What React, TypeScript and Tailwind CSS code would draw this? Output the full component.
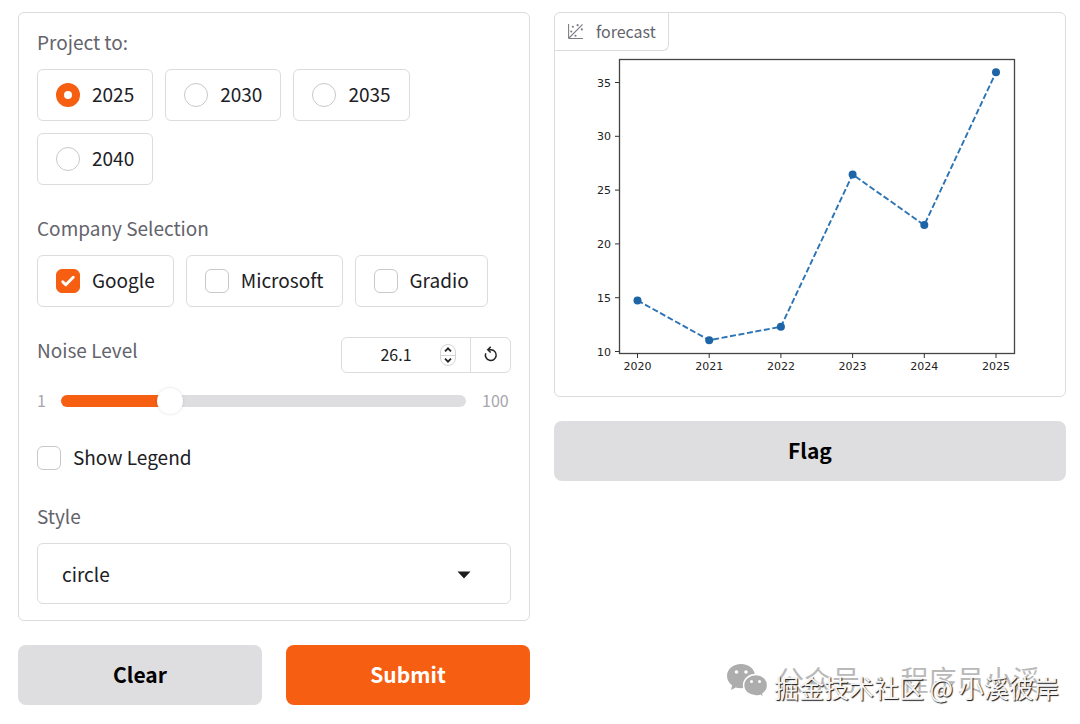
import { useState } from 'react';
import type { ReactNode } from 'react';

const YEARS = ['2025', '2030', '2035', '2040'];
const COMPANIES = ['Google', 'Microsoft', 'Gradio'];
const STYLES = ['circle', 'square', 'triangle'];

const MIN_NOISE = 1;
const MAX_NOISE = 100;
const DEFAULT_NOISE = 26.1;

const FORECAST = [
  { year: 2020, value: 14.75 },
  { year: 2021, value: 11.05 },
  { year: 2022, value: 12.3 },
  { year: 2023, value: 26.45 },
  { year: 2024, value: 21.75 },
  { year: 2025, value: 35.95 }
];

const Y_TICKS = [10, 15, 20, 25, 30, 35];

// Chart scales, in viewBox units
const chartX = (year: number) => 82.5 + (year - 2020) * 71.7;
const chartY = (value: number) => 338.5 - (value - 10) * 10.76;

function Caption({ children }: { children: ReactNode }) {
  return <span className="block text-[19px] leading-[26px] text-[#64646c]">{children}</span>;
}

interface TickBoxProps {
  checked: boolean;
  onChange: () => void;
}

function TickBox({ checked, onChange }: TickBoxProps) {
  return (
    <span className="grid size-6 shrink-0 place-items-center">
      <input
        type="checkbox"
        checked={checked}
        onChange={onChange}
        className="col-start-1 row-start-1 size-6 appearance-none rounded-md border border-[#c8c8cc] bg-white checked:border-[#f65e12] checked:bg-[#f65e12]"
      />
      {checked && (
        <svg viewBox="0 0 16 16" className="pointer-events-none col-start-1 row-start-1 size-6" fill="white">
          <path d="M12.207 4.793a1 1 0 010 1.414l-5 5a1 1 0 01-1.414 0l-2-2a1 1 0 011.414-1.414L6.5 9.086l4.293-4.293a1 1 0 011.414 0z" />
        </svg>
      )}
    </span>
  );
}

const optionClass =
  'flex h-[52px] items-center gap-3 rounded-md border border-[#dcdcdf] bg-white px-[18px] text-[19px] leading-7';

function ForecastChart() {
  const line = FORECAST.map((p) => `${chartX(p.year)},${chartY(p.value)}`).join(' ');

  return (
    <svg
      viewBox="0 0 510 383"
      className="block w-full"
      role="img"
      aria-label="forecast"
      fontFamily='"DejaVu Sans", sans-serif'
      fontSize="11"
      fill="#222"
    >
      <rect x="64.5" y="46.5" width="395" height="294" fill="none" stroke="#444" strokeWidth="1.3" />
      {Y_TICKS.map((tick) => (
        <g key={tick}>
          <line x1="60" x2="64.5" y1={chartY(tick)} y2={chartY(tick)} stroke="#333" />
          <text x="56" y={chartY(tick) + 4} textAnchor="end">{tick}</text>
        </g>
      ))}
      {FORECAST.map(({ year }) => (
        <g key={year}>
          <line x1={chartX(year)} x2={chartX(year)} y1="340.5" y2="345" stroke="#333" />
          <text x={chartX(year)} y="357" textAnchor="middle">{year}</text>
        </g>
      ))}
      <polyline points={line} fill="none" stroke="#2c73b4" strokeWidth="1.9" strokeDasharray="6 2.6" />
      {FORECAST.map((p) => (
        <circle key={p.year} cx={chartX(p.year)} cy={chartY(p.value)} r="4" fill="#1d65a6" />
      ))}
    </svg>
  );
}

function PlotIcon() {
  return (
    <svg viewBox="0 0 32 32" className="size-[17px]" fill="#7b7b82">
      <circle cx="20" cy="4" r="2" />
      <circle cx="8" cy="16" r="2" />
      <circle cx="28" cy="12" r="2" />
      <circle cx="11" cy="7" r="2" />
      <circle cx="16" cy="24" r="2" />
      <path d="M30 3.413L28.586 2L4 26.585V2H2v26a2 2 0 0 0 2 2h26v-2H5.413z" />
    </svg>
  );
}

function Watermark() {
  return (
    <div className="pointer-events-none absolute right-5 bottom-4 h-12 w-[334px] whitespace-nowrap">
      <svg viewBox="0 0 42 36" className="absolute top-0.5 left-0 h-9 w-[42px]">
        <path
          d="M15 1C7 1 1 6.300 1 13c0 3.800 2 7.100 5.100 9.300L5 27l4.700-2.500c1.700.5 3.400.8 5.300.8 8 0 14-5.500 14-12.300S23 1 15 1z"
          fill="#adadad"
        />
        <path
          d="M30 11.500c-7 0-12.400 4.700-12.400 10.800S23 33 30 33c1.500 0 2.900-.2 4.200-.6l3.600 2-.9-3.600c2.900-2 4.700-5 4.700-8.500 0-6.100-4.900-10.800-11.600-10.800z"
          fill="#adadad"
          stroke="white"
          strokeWidth="1.500"
        />
        <g fill="white">
          <circle cx="10.500" cy="9" r="1.800" />
          <circle cx="20" cy="9" r="1.800" />
          <circle cx="25.500" cy="18.500" r="1.500" />
          <circle cx="33.500" cy="18.500" r="1.500" />
        </g>
      </svg>
      <span className="absolute top-0.5 left-[50px] text-[28px] leading-8 text-[#b9b9b9]">
        公众号 · 程序员小溪
      </span>
      <span className="absolute top-2 left-12 text-[25px] leading-9 text-[#f4f4f4] [text-shadow:1px_1px_1px_#111]">
        掘金技术社区 @ 小溪彼岸
      </span>
    </div>
  );
}

export default function App() {
  const [year, setYear] = useState('2025');
  const [companies, setCompanies] = useState<string[]>(['Google']);
  const [noise, setNoise] = useState(DEFAULT_NOISE);
  const [showLegend, setShowLegend] = useState(false);
  const [style, setStyle] = useState('circle');

  const toggleCompany = (name: string) => {
    setCompanies((prev) => (prev.includes(name) ? prev.filter((c) => c !== name) : [...prev, name]));
  };

  const stepNoise = (step: number) => {
    setNoise((prev) => Math.min(MAX_NOISE, Math.max(MIN_NOISE, Number((prev + step).toFixed(1)))));
  };

  const handleClear = () => {
    setYear('');
    setCompanies([]);
    setNoise(MIN_NOISE);
    setShowLegend(false);
    setStyle('circle');
  };

  const filled = ((noise - MIN_NOISE) / (MAX_NOISE - MIN_NOISE)) * 100;

  return (
    <div className="relative min-h-screen bg-white pt-3 pr-3.5 pb-5 pl-[18px] font-['Noto_Sans_CJK_SC',sans-serif] text-[#202024]">
      <div className="grid grid-cols-2 items-start gap-6">
        {/* Inputs */}
        <form className="flex flex-col gap-6" onSubmit={(e) => e.preventDefault()}>
          <div className="flex flex-col gap-[30px] rounded-md border border-[#dcdcdf] px-[18px] py-4">
            <fieldset>
              <legend className="mb-3.5"><Caption>Project to:</Caption></legend>
              <div className="flex flex-wrap gap-3">
                {YEARS.map((y) => (
                  <label key={y} className={optionClass}>
                    <input
                      type="radio"
                      name="year"
                      checked={year === y}
                      onChange={() => setYear(y)}
                      className="size-6 appearance-none rounded-full border border-[#c8c8cc] bg-white checked:border-8 checked:border-[#f65e12]"
                    />
                    <span className="pb-0.5">{y}</span>
                  </label>
                ))}
              </div>
            </fieldset>

            <fieldset>
              <legend className="mb-3.5"><Caption>Company Selection</Caption></legend>
              <div className="flex flex-wrap gap-3">
                {COMPANIES.map((name) => (
                  <label key={name} className={optionClass}>
                    <TickBox checked={companies.includes(name)} onChange={() => toggleCompany(name)} />
                    <span className="pb-0.5">{name}</span>
                  </label>
                ))}
              </div>
            </fieldset>

            <div>
              <div className="flex items-start justify-between">
                <label htmlFor="noise"><Caption>Noise Level</Caption></label>
                <div className="flex h-9 rounded-md border border-[#dcdcdf]">
                  <div className="flex w-32 items-center pr-3.5">
                    <input
                      id="noise"
                      type="number"
                      min={MIN_NOISE}
                      max={MAX_NOISE}
                      step={0.1}
                      value={noise}
                      onChange={(e) => setNoise(Number(e.target.value))}
                      className="w-full min-w-0 [appearance:textfield] bg-transparent pb-0.5 pl-2.5 text-center text-base outline-none [&::-webkit-inner-spin-button]:appearance-none"
                    />
                    <div className="flex h-[22px] w-4 shrink-0 flex-col divide-y divide-[#d4d4d8] rounded-lg border border-[#d4d4d8]">
                      <button type="button" aria-label="Increase" onClick={() => stepNoise(0.1)} className="flex flex-1 items-center justify-center">
                        <svg viewBox="0 0 8 5" className="h-[5px] w-2" fill="none" stroke="#222" strokeWidth="1.8">
                          <path d="M1 4.300L4 1.300L7 4.300" />
                        </svg>
                      </button>
                      <button type="button" aria-label="Decrease" onClick={() => stepNoise(-0.1)} className="flex flex-1 items-center justify-center">
                        <svg viewBox="0 0 8 5" className="h-[5px] w-2" fill="none" stroke="#222" strokeWidth="1.8">
                          <path d="M1 .7L4 3.700L7 .7" />
                        </svg>
                      </button>
                    </div>
                  </div>
                  <button
                    type="button"
                    aria-label="Reset"
                    onClick={() => setNoise(DEFAULT_NOISE)}
                    className="flex w-10 items-center justify-center border-l border-[#dcdcdf] pb-0.5"
                  >
                    <svg viewBox="0 0 16 16" className="size-4" fill="none" stroke="#222" strokeWidth="1.5">
                      <path d="M2.700 7.300A5.400 5.400 0 1 0 8 3.700H5" />
                      <path d="M7.700 .9L4.800 3.700L7.700 6.500" />
                    </svg>
                  </button>
                </div>
              </div>
              <div className="mt-4 flex h-6 items-center text-base text-[#a6a6ad]">
                <span className="w-6 pb-0.5">{MIN_NOISE}</span>
                <input
                  type="range"
                  aria-label="Noise Level"
                  min={MIN_NOISE}
                  max={MAX_NOISE}
                  step={0.1}
                  value={noise}
                  onChange={(e) => setNoise(Number(e.target.value))}
                  style={{ backgroundImage: `linear-gradient(to right, #f65e12 ${filled}%, #dedee1 ${filled}%)` }}
                  className="h-3 min-w-0 flex-1 appearance-none rounded-full [&::-webkit-slider-thumb]:size-[26px] [&::-webkit-slider-thumb]:appearance-none [&::-webkit-slider-thumb]:rounded-full [&::-webkit-slider-thumb]:bg-white [&::-webkit-slider-thumb]:shadow-[0_0_3px_#00000026]"
                />
                <span className="w-[45px] pb-0.5 pl-4">{MAX_NOISE}</span>
              </div>
            </div>

            <label className="flex h-[30px] items-center gap-3 text-[19px]">
              <TickBox checked={showLegend} onChange={() => setShowLegend(!showLegend)} />
              <span className="pb-0.5">Show Legend</span>
            </label>

            <div>
              <label htmlFor="style"><Caption>Style</Caption></label>
              <div className="relative mt-3.5">
                <select
                  id="style"
                  value={style}
                  onChange={(e) => setStyle(e.target.value)}
                  className="block h-[61px] w-full appearance-none rounded-md border border-[#dcdcdf] bg-white px-6 text-[19px] leading-7"
                >
                  {STYLES.map((s) => (
                    <option key={s}>{s}</option>
                  ))}
                </select>
                <svg viewBox="0 0 14 8" className="pointer-events-none absolute top-7 right-10 h-2 w-3.5" fill="#1c1c1c">
                  <path d="M.5 .5h13L7 7.500z" />
                </svg>
              </div>
            </div>
          </div>

          <div className="grid grid-cols-2 gap-6">
            <button type="button" onClick={handleClear} className="h-[60px] rounded-lg bg-[#dedee1] text-[21px] font-bold text-black">
              Clear
            </button>
            <button type="submit" className="h-[60px] rounded-lg bg-[#f65e12] text-[21px] font-bold text-white">
              Submit
            </button>
          </div>
        </form>

        {/* Output */}
        <div className="flex flex-col gap-6">
          <div className="relative rounded-md border border-[#dcdcdf]">
            <div className="absolute top-0 left-0 flex h-[38px] items-center gap-3 rounded-br-md border-r border-b border-[#dcdcdf] px-3 text-base text-[#64646c]">
              <PlotIcon />
              <span className="pb-0.5">forecast</span>
            </div>
            <ForecastChart />
          </div>
          <button type="button" className="h-[60px] rounded-lg bg-[#dedee1] text-[21px] font-bold text-black">
            Flag
          </button>
        </div>
      </div>
      <Watermark />
    </div>
  );
}
